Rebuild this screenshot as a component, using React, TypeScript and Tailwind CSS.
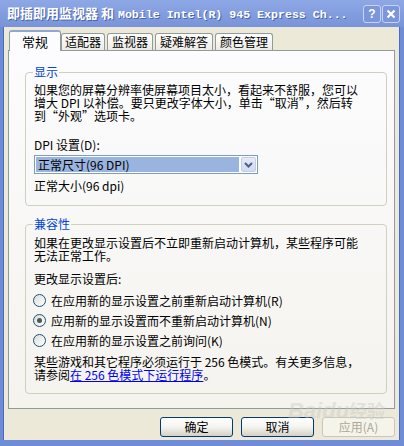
import React from "react";

const cjk = "font-['Noto_Sans_CJK_SC','Noto_Sans_CJK_JP',sans-serif]";

const Radio = ({ checked, label }: { checked?: boolean; label: string }) => (
  <div className="flex items-center h-[20px] gap-[4px]">
    <span className="w-[13px] h-[13px] rounded-full border border-[#1c5180] bg-gradient-to-br from-[#dcdcd7] to-white flex items-center justify-center">
      {checked && <span className="w-[5px] h-[5px] rounded-full bg-[#4a5d4a]" />}
    </span>
    <span className="ml-[1px]">{label}</span>
  </div>
);

const Tab = ({ label, w }: { label: string; w: string }) => (
  <div
    className={`${w} h-[17px] border border-b-0 border-[#919b9c] rounded-t-[3px] bg-gradient-to-b from-white to-[#ecebe6] flex items-center justify-center leading-[12px] text-black`}
  >
    {label}
  </div>
);

const Btn = ({ label, disabled }: { label: string; disabled?: boolean }) => (
  <button
    className={
      disabled
        ? "w-[73px] h-[20px] rounded-[3px] border border-[#c9c7ba] bg-[#f5f4ea] text-[#aca899] leading-[12px]"
        : "w-[73px] h-[20px] rounded-[3px] border border-[#003c74] bg-gradient-to-b from-white via-[#f4f4f0] to-[#d6d0c5] text-black leading-[12px]"
    }
  >
    {label}
  </button>
);

export default function App() {
  return (
    <div className={`relative w-[404px] h-[446px] overflow-hidden bg-[#6f8cd6] flex flex-col text-[12px] ${cjk}`}>
      {/* title bar */}
      <div className="h-[27px] shrink-0 flex items-center pl-[7px] pr-[4px] bg-gradient-to-b from-[#8ea8e6] to-[#7893d8]">
        <div className="flex-1 flex items-baseline text-white font-bold whitespace-nowrap [text-shadow:1px_1px_0_#4a64a8]">
          <span className="text-[13px]">即插即用监视器 和 </span>
          <span className="text-[11.6px] font-['Liberation_Mono',monospace] ml-[4px]">Mobile Intel(R) 945 Express Ch...</span>
        </div>
        <div className="flex gap-[1px]">
          <div className="w-[18px] h-[18px] rounded-[3px] border border-[#c8d4f2] bg-[#7b96da] flex items-center justify-center text-white font-bold text-[12px] font-['Liberation_Sans',sans-serif]">
            ?
          </div>
          <div className="w-[18px] h-[18px] rounded-[3px] border border-[#c8d4f2] bg-[#7b96da] flex items-center justify-center">
            <svg width="10" height="10" viewBox="0 0 10 10">
              <path d="M1.5 1.5 L8.5 8.5 M8.5 1.5 L1.5 8.5" stroke="white" strokeWidth="2.2" />
            </svg>
          </div>
        </div>
      </div>

      {/* body */}
      <div className="flex-1 ml-[3px] mr-[4px] mb-[6px] bg-[#ece9d8] border-x border-[#4a6bc4] px-[4px] pt-[3px] flex flex-col">
        {/* tabs */}
        <div className="flex items-end pl-[1px] h-[20px] relative z-10">
          <div className="w-[52px] h-[21px] -mb-px border border-b-0 border-[#919b9c] border-t-[#91a7d0] border-t-2 rounded-t-[3px] bg-[#fcfcfe] flex items-center justify-center text-[13px] text-black">
            常规
          </div>
          <Tab label="适配器" w="w-[44px]" />
          <div className="w-[2px]" />
          <Tab label="监视器" w="w-[46px]" />
          <div className="w-[2px]" />
          <Tab label="疑难解答" w="w-[58px]" />
          <div className="w-[2px]" />
          <Tab label="颜色管理" w="w-[58px]" />
        </div>

        {/* panel */}
        <div className="h-[359px] border border-[#919b9c] bg-gradient-to-b from-[#fcfcfe] to-[#f4f3ee] pl-[16px] pr-[7px] text-black leading-[13px]">
          <fieldset className="mt-[15px] border border-[#d0d0bf] rounded-[4px] pl-[8px] pb-[13px]">
            <legend className="ml-[-1px] px-[1px] text-[#0046d5] leading-[12px]">显示</legend>
            <div className="mt-[5px]">
              如果您的屏幕分辨率使屏幕项目太小，看起来不舒服，您可以
              <br />
              增大 DPI 以补偿。要只更改字体大小，单击“取消”，然后转
              <br />
              到“外观”选项卡。
            </div>
            <div className="mt-[16px]">DPI 设置(D):</div>
            <div className="mt-[4px] w-[224px] h-[19px] border border-[#7f9db9] bg-white flex items-center p-[1px]">
              <div className="flex-1 h-full bg-[#98b4df] flex items-center pl-[2px]">正常尺寸(96 DPI)</div>
              <div className="ml-[2px] w-[15px] h-full rounded-[2px] border border-[#c3cde8] bg-gradient-to-b from-[#e6eaf7] to-[#d2daf0] flex items-center justify-center">
                <svg width="9" height="6" viewBox="0 0 9 6">
                  <path d="M1 1 L4.5 4.5 L8 1" stroke="#4d6185" strokeWidth="2" fill="none" />
                </svg>
              </div>
            </div>
            <div className="mt-[5px]">正常大小(96 dpi)</div>
          </fieldset>

          <fieldset className="mt-[12px] border border-[#d0d0bf] rounded-[4px] pl-[8px] pb-[12px]">
            <legend className="ml-[-1px] px-[1px] text-[#0046d5] leading-[12px]">兼容性</legend>
            <div className="mt-[6px]">
              如果在更改显示设置后不立即重新启动计算机，某些程序可能
              <br />
              无法正常工作。
            </div>
            <div className="mt-[10px]">更改显示设置后:</div>
            <div className="mt-[5px] -ml-[1px]">
              <Radio label="在应用新的显示设置之前重新启动计算机(R)" />
              <Radio checked label="应用新的显示设置而不重新启动计算机(N)" />
              <Radio label="在应用新的显示设置之前询问(K)" />
            </div>
            <div className="mt-[5px]">
              某些游戏和其它程序必须运行于 256 色模式。有关更多信息，
              <br />
              请参阅<span className="text-[#0000ee] underline">在 256 色模式下运行程序</span>。
            </div>
          </fieldset>
        </div>

        {/* buttons */}
        <div className="mt-[8px] flex justify-end gap-[8px]">
          <Btn label="确定" />
          <Btn label="取消" />
          <Btn label="应用(A)" disabled />
        </div>
      </div>

      {/* watermark */}
      <div className="absolute left-[288px] top-[394px] text-[22px] font-bold italic text-[#c8c8c8] opacity-40 pointer-events-none font-['Liberation_Sans',sans-serif]">
        Baidu<span className={`text-[18px] not-italic ${cjk}`}>经验</span>
      </div>
    </div>
  );
}
